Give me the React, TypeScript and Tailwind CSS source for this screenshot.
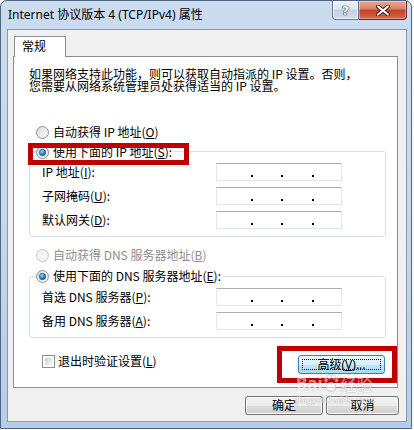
import React from "react";

const ui = "font-['Noto_Sans','Noto_Sans_CJK_SC',sans-serif]";
const body = "font-['Noto_Sans_CJK_SC',sans-serif]";

const Radio = ({ checked = false, disabled = false }: { checked?: boolean; disabled?: boolean }) => (
  <svg width="13" height="13" viewBox="0 0 13 13" className="shrink-0">
    <defs>
      <linearGradient id="radioFill" x1="0" y1="0" x2="1" y2="1">
        <stop offset="0" stopColor="#d6d6d6" />
        <stop offset="1" stopColor="#ffffff" />
      </linearGradient>
      <radialGradient id="radioDot" cx="0.4" cy="0.35" r="0.7">
        <stop offset="0" stopColor="#8fd6ff" />
        <stop offset="0.6" stopColor="#2b86c9" />
        <stop offset="1" stopColor="#0d4a7d" />
      </radialGradient>
    </defs>
    <circle
      cx="6.5"
      cy="6.5"
      r="6"
      fill={disabled ? "#f4f4f4" : "url(#radioFill)"}
      stroke={disabled ? "#c5c5c5" : "#8e8f8f"}
    />
    {checked && <circle cx="6.5" cy="6.5" r="3.2" fill="url(#radioDot)" stroke="#1b5384" strokeWidth="0.6" />}
  </svg>
);

const Checkbox = () => (
  <div className="w-[13px] h-[13px] shrink-0 border border-[#8e8f8f] bg-white p-[2px]">
    <div className="w-full h-full bg-gradient-to-br from-[#cfcfcf] to-[#f6f6f6]" />
  </div>
);

const IpBox = () => (
  <div className="w-[126px] h-[18px] border border-[#e2e7ed] border-t-[#abadb3] bg-white flex items-end pb-[3px]">
    <div className="w-[34px]" />
    <div className="w-[2px] h-[2px] bg-black" />
    <div className="w-[28px]" />
    <div className="w-[2px] h-[2px] bg-black" />
    <div className="w-[29px]" />
    <div className="w-[2px] h-[2px] bg-black" />
  </div>
);

const Key = ({ k }: { k: string }) => (
  <>
    (<u>{k}</u>)
  </>
);

const Button = ({ children, focused = false, w }: { children: React.ReactNode; focused?: boolean; w: string }) => (
  <div
    className={`${w} h-[19px] rounded-[3px] border flex items-center justify-center text-[12px] text-black ${ui} ${
      focused
        ? "border-[#3c7fb1] bg-[linear-gradient(to_bottom,#eaf6fd_0%,#d9f0fc_50%,#bee6fd_50%,#a7d9f5_100%)]"
        : "border-[#707070] bg-[linear-gradient(to_bottom,#f2f2f2_0%,#ebebeb_50%,#dddddd_50%,#cfcfcf_100%)] shadow-[inset_0_0_0_1px_#fcfcfc]"
    }`}
  >
    {focused ? (
      <div className="w-[calc(100%-6px)] h-[calc(100%-6px)] border border-dotted border-black flex items-center justify-center">
        {children}
      </div>
    ) : (
      children
    )}
  </div>
);

export default function App() {
  return (
    <div className="w-[414px] h-[430px] bg-[#f7f9fc] relative overflow-hidden">
      <div className="w-[412px] h-[429px] rounded-t-[7px] border border-[#4f6580] bg-gradient-to-b from-[#cbdcf0] via-[#c4d8ee] to-[#b5cdea] flex flex-col">
        {/* title bar */}
        <div className="h-[28px] flex items-start pl-[7px] pr-[4px]">
          <div className={`pt-[6px] text-[12px] leading-[16px] text-black ${ui}`}>
            Internet 协议版本 4 (TCP/IPv4) 属性
          </div>
          <div className="ml-auto flex">
            <div className="w-[27px] h-[19px] rounded-bl-[4px] border border-t-0 border-[#6c7f98] bg-[linear-gradient(to_bottom,#eef3f9_0%,#dbe4ef_45%,#c3d1e1_50%,#d1dced_100%)] shadow-[inset_0_0_0_1px_rgba(255,255,255,0.6)] flex items-center justify-center">
              <span className="text-[13px] leading-none font-bold text-white font-['DejaVu_Sans',sans-serif] [text-shadow:0_0_1px_#2d3b4f,0_0_1px_#2d3b4f,0_0_1px_#2d3b4f]">
                ?
              </span>
            </div>
            <div className="w-[48px] h-[19px] rounded-br-[4px] border border-t-0 border-l-0 border-[#6b2a22] bg-[linear-gradient(to_bottom,#e9a996_0%,#dc7f66_45%,#c63e22_50%,#d66a4d_100%)] shadow-[inset_0_0_0_1px_rgba(255,255,255,0.35)] flex items-center justify-center">
              <svg width="14" height="11" viewBox="0 0 14 11">
                <path d="M2 1.5 L12 9.5 M12 1.5 L2 9.5" stroke="#3b1810" strokeWidth="4" strokeLinecap="round" />
                <path d="M2 1.5 L12 9.5 M12 1.5 L2 9.5" stroke="#ffffff" strokeWidth="2.2" strokeLinecap="round" />
              </svg>
            </div>
          </div>
        </div>

        {/* client */}
        <div className="flex-1 pl-[6px] pr-[4px] pb-[6px]">
          <div className="h-full border border-[#8a98ab] bg-[#f0f0f0] flex flex-col">
            <div
              className={`mt-[6px] ml-[6px] w-[52px] h-[21px] -mb-[1px] relative z-10 border border-b-0 border-[#898c95] bg-white flex items-center pl-[7px] text-[12px] text-black ${ui}`}
            >
              常规
            </div>
            <div className={`ml-[5px] w-[385px] h-[332px] border border-[#898c95] bg-white flex flex-col text-[12px] text-black ${body}`}>
              <div className="pt-[11px] pl-[15px] leading-[12px]">
                <div>如果网络支持此功能，则可以获取自动指派的 IP 设置。否则，</div>
                <div>您需要从网络系统管理员处获得适当的 IP 设置。</div>
              </div>

              <div className="mt-[32px] pl-[22px] h-[16px] flex items-center gap-[4px]">
                <Radio />
                <span>
                  自动获得 IP 地址<Key k="O" />
                </span>
              </div>

              <div className="mt-[11px] ml-[15px] w-[357px] border border-[#d5dfe5] rounded-[3px] pb-[7px]">
                <div className="-mt-[8px] ml-[6px] w-fit pr-[2px] bg-white h-[16px] flex items-center gap-[4px]">
                  <Radio checked />
                  <span>
                    使用下面的 IP 地址<Key k="S" />:
                  </span>
                </div>
                <div className="mt-[3px] flex flex-col gap-[6px]">
                  {[
                    ["IP 地址", "I"],
                    ["子网掩码", "U"],
                    ["默认网关", "D"],
                  ].map(([label, k]) => (
                    <div key={k} className="h-[18px] pl-[12px] flex items-center">
                      <span className="w-[174px]">
                        {label}
                        <Key k={k} />:
                      </span>
                      <IpBox />
                    </div>
                  ))}
                </div>
              </div>

              <div className="mt-[10px] pl-[22px] h-[16px] flex items-center gap-[4px] text-[#8d8d8d]">
                <Radio disabled />
                <span>
                  自动获得 DNS 服务器地址<Key k="B" />
                </span>
              </div>

              <div className="mt-[13px] ml-[15px] w-[357px] border border-[#d5dfe5] rounded-[3px] pb-[7px]">
                <div className="-mt-[9px] ml-[6px] w-fit pr-[2px] bg-white h-[16px] flex items-center gap-[4px]">
                  <Radio checked />
                  <span>
                    使用下面的 DNS 服务器地址<Key k="E" />:
                  </span>
                </div>
                <div className="mt-[4px] flex flex-col gap-[6px]">
                  {[
                    ["首选 DNS 服务器", "P"],
                    ["备用 DNS 服务器", "A"],
                  ].map(([label, k]) => (
                    <div key={k} className="h-[18px] pl-[12px] flex items-center">
                      <span className="w-[174px]">
                        {label}
                        <Key k={k} />:
                      </span>
                      <IpBox />
                    </div>
                  ))}
                </div>
              </div>

              <div className="mt-[15px] flex items-start">
                <div className="pl-[28px] h-[16px] flex items-center gap-[3px]">
                  <Checkbox />
                  <span>
                    退出时验证设置<Key k="L" />
                  </span>
                </div>
                <div className="ml-auto mr-[12px] mt-[2px]">
                  <Button focused w="w-[87px]">
                    高级(<u>V</u>)...
                  </Button>
                </div>
              </div>
            </div>

            <div className="mt-[8px] flex justify-end gap-[3px] pr-[7px]">
              <Button w="w-[78px]">确定</Button>
              <Button w="w-[73px]">取消</Button>
            </div>
          </div>
        </div>
      </div>

      {/* annotation boxes */}
      <div className="absolute left-[28px] top-[143px] w-[161px] h-[22px] border-[5px] border-[#c00000]" />
      <div className="absolute left-[277px] top-[346px] w-[120px] h-[37px] border-[5px] border-[#c00000]" />

      {/* watermark */}
      <div className="absolute left-[296px] top-[374px] flex flex-col items-start opacity-50 pointer-events-none">
        <div className="flex items-end text-white [text-shadow:0_0_1px_#7a7a7a,0_0_1px_#7a7a7a]">
          <span className={`text-[17px] leading-[18px] font-bold ${ui}`}>Bai</span>
          <svg width="16" height="18" viewBox="0 0 16 18" className="mb-[1px]">
            <g fill="#ffffff" stroke="#8a8a8a" strokeWidth="0.8">
              <ellipse cx="3" cy="6" rx="2" ry="2.6" />
              <ellipse cx="6.5" cy="2.8" rx="2" ry="2.6" />
              <ellipse cx="10.5" cy="2.8" rx="2" ry="2.6" />
              <ellipse cx="13.5" cy="6" rx="2" ry="2.6" />
              <path d="M8 8 C4 8 2 13 3.5 15.5 C5 17.5 11 17.5 12.5 15.5 C14 13 12 8 8 8 Z" />
            </g>
          </svg>
          <span className={`text-[16px] leading-[18px] ml-[2px] ${body}`}>经验</span>
        </div>
        <span className={`text-[9px] leading-[10px] mt-[2px] text-white [text-shadow:0_0_1px_#7a7a7a,0_0_1px_#7a7a7a] ${ui}`}>
          jingyan.baidu.com
        </span>
      </div>
    </div>
  );
}
